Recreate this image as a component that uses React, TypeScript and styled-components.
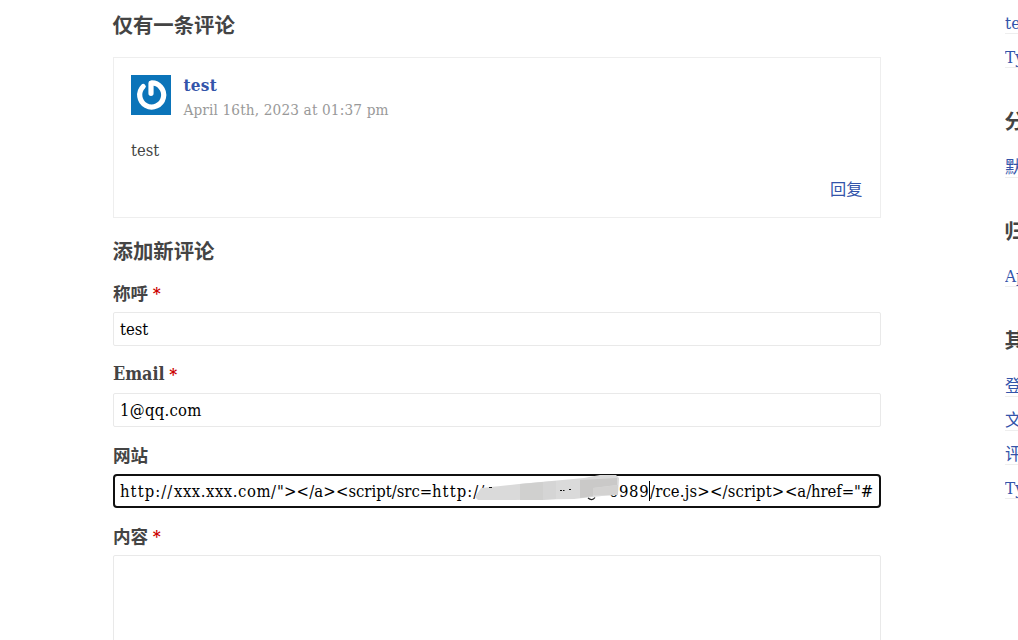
import React from "react";
import styled, { createGlobalStyle } from "styled-components";

const GlobalStyle = createGlobalStyle`
  *, *::before, *::after { box-sizing: border-box; }
  html, body { margin: 0; padding: 0; background: #fff; overflow: hidden; }
  body {
    color: #444;
    font-family: "DejaVu Serif Condensed", "DejaVu Serif", "Noto Sans CJK SC", serif;
    font-stretch: condensed;
    font-size: 16px;
  }
  h3, p, ul { margin: 0; padding: 0; }
  a { color: #3354aa; text-decoration: none; }
`;

const Page = styled.div`
  display: flex;
  width: 1018px;
  height: 640px;
  overflow: hidden;
`;

const Main = styled.main`
  width: 768px;
  margin-left: 113px;
  flex: none;
`;

const Heading = styled.h3`
  height: 30px;
  line-height: 28px;
  text-indent: -0.5px;
  font-family: "Noto Sans CJK SC", sans-serif;
  font-size: 20.4px;
  font-weight: 700;
  white-space: nowrap;
`;

const CommentsHeading = styled(Heading)`
  margin-top: 10px;
`;

const FormHeading = styled(Heading)`
  margin-top: 18px;
`;

const Comment = styled.article`
  height: 161px;
  margin-top: 17px;
  padding: 17px;
  border: 1px solid #eee;
`;

const Author = styled.header`
  display: flex;
  height: 40px;
`;

const Meta = styled.div`
  margin-left: 12.4px;
  margin-top: -1px;
`;

const Name = styled.a`
  display: block;
  height: 24px;
  line-height: 22px;
  font-size: 17px;
  font-weight: 700;
  letter-spacing: 0.3px;
`;

const Time = styled.time`
  display: block;
  height: 25px;
  line-height: 25px;
  color: #999;
  font-size: 15.2px;
  letter-spacing: 0.15px;
  white-space: nowrap;
`;

const Body = styled.p`
  margin-top: 24px;
  height: 24px;
  line-height: 24px;
  font-size: 16.4px;
`;

const Reply = styled.div`
  margin-top: 12px;
  height: 26px;
  line-height: 26px;
  text-align: right;
  font-family: "Noto Sans CJK SC", sans-serif;
  font-size: 16.2px;

  a { margin-right: 0.6px; }
`;

const Label = styled.label`
  display: flex;
  align-items: center;
  height: 26px;
  line-height: 24px;
  margin-bottom: 6px;
  font-family: "Noto Sans CJK SC", sans-serif;
  font-size: 17.6px;
  font-weight: 700;
`;

const Latin = styled.span`
  font-family: "DejaVu Serif Condensed", "DejaVu Serif", serif;
  font-size: 17.8px;
`;

const Required = styled.span`
  height: 25px;
  margin-left: 4.5px;
  color: #c00;
  font-family: "DejaVu Serif Condensed", "DejaVu Serif", serif;
  font-size: 17px;
`;

const Field = styled.div`
  margin-bottom: 15px;
`;

const Form = styled.form`
  padding-top: 14px;
`;

const Input = styled.div<{ $focused?: boolean; $track?: number }>`
  position: relative;
  display: flex;
  align-items: center;
  height: 34px;
  padding: 0 ${(p) => (p.$focused ? 5 : 6)}px;
  border: ${(p) => (p.$focused ? "2px solid #101010" : "1px solid #e9e9e9")};
  border-radius: ${(p) => (p.$focused ? 4 : 2)}px;
  color: #000;
  font-size: 16.5px;
  letter-spacing: ${(p) => p.$track ?? 0}px;
  white-space: pre;
`;

const Segment = styled.span<{ $width: number; $track?: number }>`
  flex: none;
  width: ${(p) => p.$width}px;
  letter-spacing: ${(p) => p.$track ?? 0}px;
`;

const Caret = styled.span`
  flex: none;
  width: 1px;
  height: 20px;
  background: #000;
`;

const Smudge = styled.svg`
  position: absolute;
  left: 359px;
  top: -1px;
  width: 150px;
  height: 32px;
`;

const TextArea = styled.div`
  height: 120px;
  border: 1px solid #e9e9e9;
  border-radius: 2px;
`;

const Sidebar = styled.aside`
  flex: none;
  width: 13px;
  margin-left: 124px;
  padding-top: 12px;
  overflow: hidden;
`;

const SideHeading = styled(Heading)`
  margin-top: 38.2px;
  margin-bottom: 19.4px;
`;

const SideList = styled.ul`
  list-style: none;
`;

const SideItem = styled.li`
  height: 34px;
  white-space: nowrap;

  &:last-child { height: 22px; }
`;

const SideLink = styled.a`
  display: block;
  width: fit-content;
  height: 22px;
  line-height: 23px;
  border-bottom: 1px solid #eee;
  font-size: 17px;
`;

const Avatar = () => (
  <svg width="40" height="40" viewBox="0 0 40 40" aria-hidden="true">
    <rect width="40" height="40" fill="#0b74b9" />
    <path
      d="M12.2 11.5 A12 12 0 1 0 20 8 V18.3"
      fill="none"
      stroke="#fff"
      strokeWidth="5.2"
      strokeLinecap="round"
      strokeLinejoin="round"
    />
  </svg>
);

const urlStart = [
  { text: "http://", width: 54, track: 1.05 },
  { text: "xxx.xxx.com/", width: 103, track: 0.55 },
  { text: '"></a>', width: 59, track: 0.15 },
  { text: "<script/src=", width: 96, track: 0 },
  { text: "http://", width: 177, track: 1.05 },
  { text: "0989", width: 40, track: 0.6 },
];

const urlEnd = [
  { text: "/rce.js>", width: 60, track: 0.15 },
  { text: "</script>", width: 75, track: 0.15 },
  { text: '<a/href="#', width: 88, track: -0.08 },
];

const groups = [
  { title: "", links: ["test", "Typecho"] },
  { title: "分类", links: ["默认分类"] },
  { title: "归档", links: ["April 2023"] },
  { title: "其它", links: ["登录", "文章 RSS", "评论 RSS", "Typecho"] },
];

export default function App() {
  return (
    <>
      <GlobalStyle />
      <Page>
        <Main>
          <CommentsHeading>仅有一条评论</CommentsHeading>
          <Comment>
            <Author>
              <Avatar />
              <Meta>
                <Name href="#">test</Name>
                <Time>April 16th, 2023 at 01:37 pm</Time>
              </Meta>
            </Author>
            <Body>test</Body>
            <Reply>
              <a href="#">回复</a>
            </Reply>
          </Comment>
          <FormHeading>添加新评论</FormHeading>
          <Form>
            <Field>
              <Label>称呼<Required>*</Required></Label>
              <Input>test</Input>
            </Field>
            <Field>
              <Label><Latin>Email</Latin><Required>*</Required></Label>
              <Input $track={0.3}>1@qq.com</Input>
            </Field>
            <Field>
              <Label>网站</Label>
              <Input $focused>
                {urlStart.map((s, i) => (
                  <Segment key={i} $width={s.width} $track={s.track}>{s.text}</Segment>
                ))}
                <Caret />
                {urlEnd.map((s, i) => (
                  <Segment key={i} $width={s.width} $track={s.track}>{s.text}</Segment>
                ))}
                <Smudge viewBox="0 0 150 32">
                  <path d="M7 13 L45 9 L110 3 L126 0 H142 L145 3 L144 20 L128 21 L100 24 L40 25 L4 25 L1 22 Z" fill="#dadada" />
                  <path d="M46 9 L69 7 V25 H46 Z" fill="#d0d0cf" />
                  <path d="M69 7 L82 6 V24 L69 25 Z" fill="#d5d5d5" />
                  <path d="M106 5 L143 3 V10 L119 13 V21 L106 23 Z" fill="#cac9c8" />
                  <path d="M119 13 L144 10 V20 H119 Z" fill="#d3d2d1" />
                  <path d="M15 12.5 H18 M86 15.5 H88 M89 15.5 H90.5 M95 14.5 H97" stroke="#111" />
                  <path d="M114 23 Q118 26.5 121 22.5" fill="none" stroke="#222" strokeWidth="1.2" />
                </Smudge>
              </Input>
            </Field>
            <Field>
              <Label>内容<Required>*</Required></Label>
              <TextArea />
            </Field>
          </Form>
        </Main>
        <Sidebar>
          {groups.map((g, i) => (
            <section key={i}>
              {g.title && <SideHeading>{g.title}</SideHeading>}
              <SideList>
                {g.links.map((text) => (
                  <SideItem key={text}>
                    <SideLink href="#">{text}</SideLink>
                  </SideItem>
                ))}
              </SideList>
            </section>
          ))}
        </Sidebar>
      </Page>
    </>
  );
}
